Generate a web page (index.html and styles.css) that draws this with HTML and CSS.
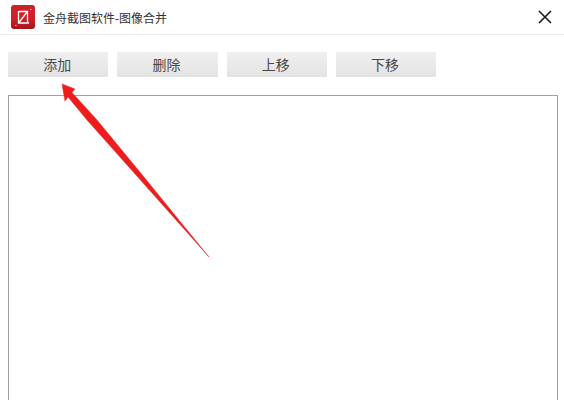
FILE: index.html
```html
<!DOCTYPE html>
<html lang="zh-CN">
<head>
  <meta charset="UTF-8" />
  <title>金舟截图软件-图像合并</title>
  <link rel="stylesheet" href="styles.css">
</head>
<body>
  <div class="window">
    <header class="titlebar">
      <svg class="logo" viewBox="0 0 24 24" aria-hidden="true">
        <defs>
          <linearGradient id="logoBg" x1="0" y1="0" x2="0" y2="1">
            <stop offset="0" stop-color="#c8232b" />
            <stop offset="0.6" stop-color="#d01f26" />
            <stop offset="1" stop-color="#a5151b" />
          </linearGradient>
        </defs>
        <rect width="24" height="24" rx="3" fill="url(#logoBg)" />
        <path d="M8 6.500H16.500V18M7.500 6V18H18M8 17.500L16 7" fill="none" stroke="#fff" stroke-width="1.300" />
        <path d="M4 20.500h1.500M19 4.500h1.500" stroke="#f5c6c6" stroke-width="1.200" />
      </svg>
      <span class="title">金舟截图软件-图像合并</span>
      <svg class="close" viewBox="0 0 14 14" aria-hidden="true">
        <path d="M1 1L13 13M13 1L1 13" fill="none" stroke="#1a1a1a" stroke-width="1.600" />
      </svg>
    </header>
    <div class="toolbar">
      <button class="btn">添加</button>
      <button class="btn">删除</button>
      <button class="btn">上移</button>
      <button class="btn">下移</button>
    </div>
    <div class="panel"></div>
    <svg class="arrow" viewBox="0 0 564 400" aria-hidden="true">
      <path d="M62 84L75 89L72 92.500L97 120L141.500 174L209 257L136 175L87 120L68 97L65 101Z" fill="#ee1c1c" stroke="#d92a26" stroke-width="0.500" />
    </svg>
  </div>
</body>
</html>
```

FILE: styles.css
```css
* {
  margin: 0;
  padding: 0;
  box-sizing: border-box;
}
html, body {
  height: 100%;
  overflow: hidden;
}
body {
  background: #fff;
  font-family: "Liberation Sans", "Noto Sans CJK SC", sans-serif;
}
.window {
  position: relative;
  display: flex;
  flex-direction: column;
  height: 100%;
}
.titlebar {
  display: flex;
  align-items: center;
  height: 35px;
  padding: 0 12px 0 11px;
  border-bottom: 1px solid #ececec;
  flex: none;
}
.logo {
  width: 24px;
  height: 24px;
  margin-right: 8px;
}
.title {
  font-size: 12px;
  color: #333;
}
.close {
  width: 14px;
  height: 14px;
  margin-left: auto;
}
.toolbar {
  display: flex;
  gap: 9px;
  padding: 17px 0 0 8px;
  flex: none;
}
.btn {
  width: 100.300px;
  height: 25px;
  padding: 0 2px 2px 0;
  border: none;
  background: linear-gradient(#f0f0f0, #e3e3e3);
  font-family: inherit;
  font-size: 14px;
  color: #4a4a4a;
}
.panel {
  flex: 1;
  margin: 18px 6px 0 8px;
  border: 1px solid #a0a0a0;
  border-bottom: none;
  background: #fff;
}
.arrow {
  position: absolute;
  top: 0;
  left: 0;
  width: 564px;
  height: 400px;
  pointer-events: none;
}
```
